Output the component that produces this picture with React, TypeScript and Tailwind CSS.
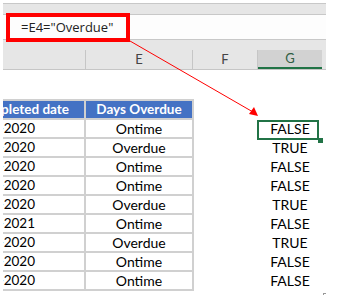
const rows = [
  { date: '15-10-2020', status: 'Ontime', result: 'FALSE' },
  { date: '18-10-2020', status: 'Overdue', result: 'TRUE' },
  { date: '21-10-2020', status: 'Ontime', result: 'FALSE' },
  { date: '24-10-2020', status: 'Ontime', result: 'FALSE' },
  { date: '02-11-2020', status: 'Overdue', result: 'TRUE' },
  { date: '05-01-2021', status: 'Ontime', result: 'FALSE' },
  { date: '09-11-2020', status: 'Overdue', result: 'TRUE' },
  { date: '12-11-2020', status: 'Ontime', result: 'FALSE' },
  { date: '16-11-2020', status: 'Ontime', result: 'FALSE' },
];

function ColumnHeaders() {
  return (
    <div className="flex h-[20px] bg-[#e6e6e6] border-b border-[#c6c6c6] text-[13px] text-[#444]">
      <div className="w-[83px] border-r border-[#c6c6c6]" />
      <div className="w-[107px] border-r border-[#c6c6c6] flex items-center justify-center">E</div>
      <div className="w-[65px] border-r border-[#c6c6c6] flex items-center justify-center">F</div>
      <div className="w-[64px] bg-[#d2d2d2] border-b-2 border-[#217346] flex items-center justify-center text-[#2f5d43]">
        G
      </div>
      <div className="flex-1" />
    </div>
  );
}

export default function App() {
  return (
    <div className="relative w-[344px] h-[308px] overflow-hidden bg-white font-['Lato',sans-serif] text-black">
      <div className="ml-[3px] mt-[3px] w-[323px]">
        <div className="h-[12px] bg-[#e6e6e6] border-y border-[#c8c8c8]" />
        <div className="h-[25px] bg-[#fdfdfd] border-b border-[#c8c8c8] flex items-center pl-[18px] pt-[1px] font-['Open_Sans',sans-serif] text-[13px] text-[#222]">
          =E4="Overdue"
        </div>
        <div className="h-[10px] bg-[#e6e6e6]" />
        <ColumnHeaders />
      </div>

      <div className="flex mt-[29px] ml-[3px]">
        <div className="grid grid-cols-[81px_106px] gap-[2px] bg-[#d0d0d0] pt-[2px] pr-[2px] pb-[2px] auto-rows-[17px]">
          <div className="bg-[#4472c4] text-white font-bold text-[13.5px] overflow-hidden flex items-center justify-end pr-[15px] whitespace-nowrap">
            Completed date
          </div>
          <div className="bg-[#4472c4] text-white font-bold text-[13.5px] flex items-center justify-center">
            Days Overdue
          </div>
          {rows.map((r) => (
            <>
              <div key={r.date} className="bg-white text-[13.5px] overflow-hidden flex items-center justify-end pr-[49px] whitespace-nowrap">
                {r.date}
              </div>
              <div key={r.date + 's'} className="bg-white text-[14px] flex items-center justify-center">
                {r.status}
              </div>
            </>
          ))}
        </div>

        <div className="ml-[64px] mt-[21px] w-[64px] flex flex-col gap-[2px]">
          {rows.map((r, i) => (
            <div key={i} className="h-[17px] flex items-center justify-center text-[14px]">
              {r.result}
            </div>
          ))}
        </div>
      </div>

      {/* annotations */}
      <div className="absolute left-[6px] top-[13px] w-[124px] h-[29px] border-4 border-[#ff0000]" />
      <svg className="absolute left-0 top-0" width="344" height="308">
        <line x1="130" y1="41" x2="253" y2="112" stroke="#ff0000" strokeWidth="1" />
        <polygon points="258,116 249,114 254,107" fill="#ff0000" />
      </svg>
      <div className="absolute left-[257px] top-[120px] w-[62px] h-[20px] border-2 border-[#217346]" />
      <div className="absolute left-[318px] top-[138px] w-[5px] h-[5px] bg-[#217346]" />
      <div className="absolute left-[323px] top-[293px] w-[3px] h-[1px] bg-[#999]" />
      <div className="absolute left-[323px] top-[293px] w-[1px] h-[2px] bg-[#999]" />
    </div>
  );
}
